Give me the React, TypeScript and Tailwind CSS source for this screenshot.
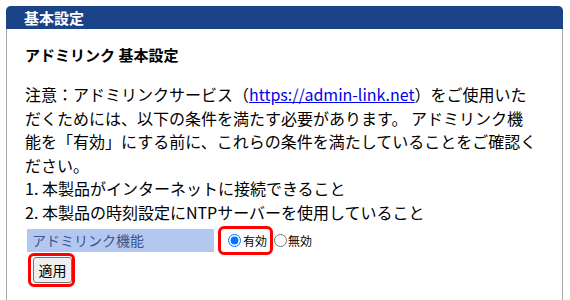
export default function App() {
  return (
    <div
      className="w-[570px] h-[300px] bg-white pt-[6px] pl-[6px] overflow-hidden text-black"
      style={{ fontFamily: '"Noto Sans CJK JP", "Noto Sans", sans-serif' }}
    >
      <div className="w-[557px] h-[294px] border-x border-[#a8a8a8] rounded-t-[5px]">
        <div className="h-[23px] -mx-px bg-[#1b4387] rounded-t-[5px] pl-[18px] text-white text-[15px] font-bold leading-[23px]">
          基本設定
        </div>
        <div className="px-[18px]">
          <h2 className="mt-[14px] text-[15px] font-bold leading-[23px]">アドミリンク 基本設定</h2>
          <p className="mt-[17px] text-[16px] leading-[23.5px] whitespace-nowrap">
            注意：アドミリンクサービス（
            <a href="#" className="text-[#0000ee] underline">
              https://admin-link.net
            </a>
            ）をご使用いた
            <br />
            だくためには、以下の条件を満たす必要があります。 アドミリンク機
            <br />
            能を「有効」にする前に、これらの条件を満たしていることをご確認く
            <br />
            ださい。
            <br />
            1.&nbsp;本製品がインターネットに接続できること
            <br />
            2.&nbsp;本製品の時刻設定にNTPサーバーを使用していること
          </p>
          <div className="mt-[2px] flex items-center">
            <div className="ml-[2px] w-[187px] h-[23px] bg-[#b4c7f0] pl-[5px] text-[14px] leading-[23px] text-[#3a5688]">
              アドミリンク機能
            </div>
            <label className="ml-[4px] h-[29px] w-[55px] flex items-center border-[3px] border-[#ff0000] rounded-[6px] pl-[7px] text-[12px]">
              <input type="radio" name="adm" defaultChecked className="m-0 w-[13px] h-[13px] accent-[#0075ff]" />
              <span className="ml-[2px]">有効</span>
            </label>
            <label className="ml-[1px] flex items-center text-[12px]">
              <input type="radio" name="adm" className="m-0 w-[13px] h-[13px]" />
              <span className="ml-[1px]">無効</span>
            </label>
          </div>
          <div className="-mt-[2px] ml-[3px] w-[47px] h-[34px] border-[3px] border-[#ff0000] rounded-[6px] pl-[2px] pt-[1px]">
            <button className="w-[39px] h-[26px] bg-[#efefef] border border-[#767676] rounded-[3px] text-[14px] leading-none">
              適用
            </button>
          </div>
        </div>
      </div>
    </div>
  );
}
